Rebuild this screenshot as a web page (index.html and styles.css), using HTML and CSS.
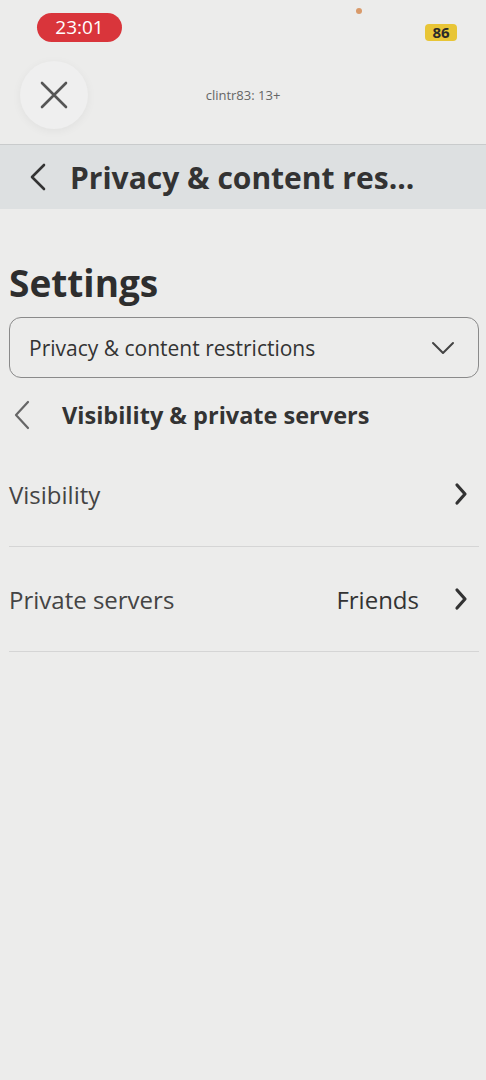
FILE: index.html
```html
<!DOCTYPE html>
<html lang="en">
<head>
    <meta charset="UTF-8">
    <meta name="viewport" content="width=device-width, initial-scale=1.0">
    <title>Settings</title>
    <link rel="stylesheet" href="styles.css">
</head>
<body>
    <div class="status-bar">
        <span class="clock">23:01</span>
        <span class="dot"></span>
        <span class="battery">86</span>
    </div>

    <div class="top-bar">
        <button class="close-btn" type="button">
            <svg width="30" height="30" viewBox="0 0 30 30"><path d="M3 3 L27 27 M27 3 L3 27" stroke="#555" stroke-width="2.6" fill="none" stroke-linecap="round"/></svg>
        </button>
        <span class="account">clintr83: 13+</span>
    </div>

    <div class="page-header">
        <svg class="back" width="20" height="30" viewBox="0 0 20 30"><path d="M16 3 L4 15 L16 27" stroke="#333" stroke-width="2.6" fill="none" stroke-linecap="round" stroke-linejoin="round"/></svg>
        <h1>Privacy &amp; content res...</h1>
    </div>

    <div class="content">
        <h2 class="settings-title">Settings</h2>

        <div class="dropdown">
            <span>Privacy &amp; content restrictions</span>
            <svg width="24" height="14" viewBox="0 0 24 14"><path d="M2 2 L12 12 L22 2" stroke="#444" stroke-width="2" fill="none" stroke-linecap="round" stroke-linejoin="round"/></svg>
        </div>

        <div class="section-head">
            <svg width="18" height="30" viewBox="0 0 18 30"><path d="M15 2 L3 15 L15 28" stroke="#666" stroke-width="2.2" fill="none" stroke-linecap="round" stroke-linejoin="round"/></svg>
            <span>Visibility &amp; private servers</span>
        </div>

        <div class="list">
            <div class="row">
                <span class="label">Visibility</span>
                <svg class="chev" width="16" height="24" viewBox="0 0 16 24"><path d="M4 3 L12 12 L4 21" stroke="#333" stroke-width="3.2" fill="none" stroke-linecap="round" stroke-linejoin="round"/></svg>
            </div>
            <div class="row">
                <span class="label">Private servers</span>
                <span class="value">Friends</span>
                <svg class="chev" width="16" height="24" viewBox="0 0 16 24"><path d="M4 3 L12 12 L4 21" stroke="#333" stroke-width="3.2" fill="none" stroke-linecap="round" stroke-linejoin="round"/></svg>
            </div>
        </div>
    </div>
</body>
</html>
```

FILE: styles.css
```css
body {
    margin: 0;
    background-color: #ececeb;
    font-family: 'Open Sans', 'Noto Sans', sans-serif;
    color: #333;
    height: 1080px;
}

.status-bar {
    position: relative;
    height: 56px;
}

.clock {
    position: absolute;
    left: 37px;
    top: 13px;
    width: 85px;
    height: 29px;
    border-radius: 15px;
    background-color: #d9353b;
    color: #fff;
    font-size: 19px;
    line-height: 29px;
    text-align: center;
}

.dot {
    position: absolute;
    left: 356px;
    top: 8px;
    width: 6px;
    height: 6px;
    border-radius: 50%;
    background-color: #d99a6a;
}

.battery {
    position: absolute;
    left: 425px;
    top: 24px;
    width: 32px;
    height: 17px;
    border-radius: 4px;
    background-color: #e8c536;
    color: #2a2a2a;
    font-size: 15px;
    font-weight: 700;
    line-height: 17px;
    text-align: center;
}

.top-bar {
    position: relative;
    height: 88px;
    display: flex;
    align-items: center;
    justify-content: center;
}

.close-btn {
    position: absolute;
    left: 20px;
    top: 5px;
    width: 68px;
    height: 68px;
    border: none;
    border-radius: 50%;
    background-color: #efefef;
    box-shadow: 0 2px 10px rgba(0, 0, 0, 0.05);
    display: flex;
    align-items: center;
    justify-content: center;
    padding: 0;
}

.account {
    font-size: 13px;
    color: #666;
    margin-top: -10px;
}

.page-header {
    height: 64px;
    background-color: #dde0e1;
    border-top: 1px solid #c9cbcc;
    display: flex;
    align-items: center;
    padding-left: 28px;
}

.page-header .back {
    margin-right: 22px;
}

.page-header h1 {
    margin: 0;
    font-size: 30px;
    font-weight: 700;
    color: #333;
}

.content {
    padding: 0 7px 0 9px;
}

.settings-title {
    margin: 50px 0 0 0;
    font-size: 37px;
    font-weight: 700;
    line-height: 48px;
    color: #2e2e2e;
}

.dropdown {
    margin-top: 10px;
    height: 59px;
    border: 1px solid #8a8a8a;
    border-radius: 12px;
    display: flex;
    align-items: center;
    justify-content: space-between;
    padding: 0 23px 0 19px;
    font-size: 21px;
    color: #333;
}

.section-head {
    margin-top: 10px;
    height: 54px;
    display: flex;
    align-items: center;
    padding-left: 4px;
    font-size: 23.5px;
    font-weight: 700;
    color: #333;
}

.section-head svg {
    margin-right: 31px;
}

.row {
    height: 104px;
    display: flex;
    align-items: center;
    border-bottom: 1px solid #d5d5d5;
    font-size: 24px;
    color: #444;
}

.row .label {
    flex: 1;
}

.row .value {
    color: #333;
    margin-right: 34px;
}

.row .chev {
    margin-right: 10px;
}
```
